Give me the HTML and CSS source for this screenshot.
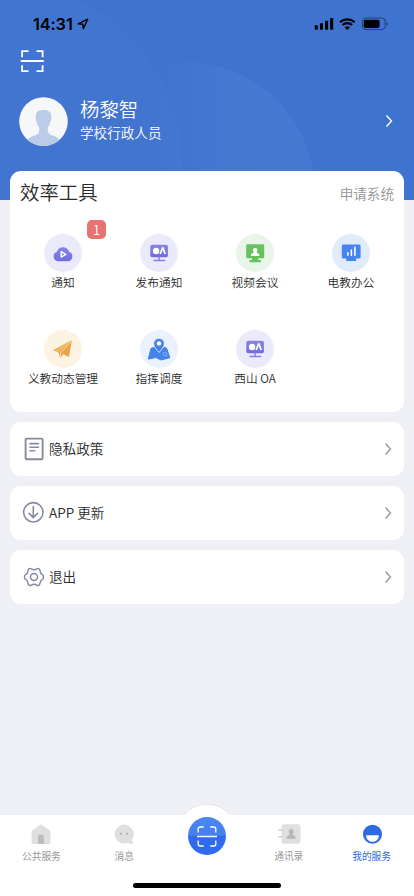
FILE: index.html
```html
<!DOCTYPE html>
<html lang="zh-CN">
<head>
<meta charset="utf-8">
<meta name="viewport" content="width=device-width, initial-scale=1">
<title>我的服务</title>
<link rel="stylesheet" href="styles.css">
</head>
<body>
<svg width="0" height="0" class="defs" aria-hidden="true">
  <defs>
    <linearGradient id="violet" x1="0" y1="0" x2="0" y2="1"><stop offset="0" stop-color="#8984e4"/><stop offset="1" stop-color="#716ce0"/></linearGradient>
    <symbol id="oa" viewBox="0 0 38 38">
      <rect x="10.3" y="10.8" width="17.6" height="12.4" rx="1.8" fill="url(#violet)"/>
      <path d="M19 23v3.4M14 26.6h10.6" stroke="#8580df" stroke-width="1.5" stroke-linecap="round"/>
      <circle cx="16.1" cy="17" r="3.2" fill="#fff"/>
      <path d="M20.2 20l2.2-5.8h.6l2.2 5.8" fill="none" stroke="#fff" stroke-width="1.7"/>
    </symbol>
    <symbol id="chevron" viewBox="0 0 8 14"><path d="M1.5 1.5L6.5 7l-5 5.5" fill="none" stroke="currentColor" stroke-width="1.4"/></symbol>
  </defs>
</svg>
<div class="app">
  <header class="hero">
    <svg class="hero-bg" viewBox="0 0 414 200"><defs><linearGradient id="arc" gradientUnits="userSpaceOnUse" x1="150" x2="230" y1="0" y2="0"><stop offset="0" stop-color="#fff" stop-opacity="0"/><stop offset="1" stop-color="#fff" stop-opacity=".04"/></linearGradient></defs><circle cx="0" cy="165" r="182" fill="#fff" fill-opacity=".02"/><circle cx="185" cy="192" r="130" fill="url(#arc)"/></svg>
    <div class="status">
      <span class="time">14:31</span>
      <svg class="loc" width="12" height="12" viewBox="0 0 12 12"><path d="M1.2 5.9L10.7 1.2 6.3 10.7 5.8 6.2z" fill="none" stroke="#000" stroke-width="1.4" stroke-linejoin="round"/></svg>
      <svg class="signals" width="76" height="14" viewBox="0 0 76 14">
        <rect x=".7" y="8.2" width="3.1" height="4.5" rx=".8"/><rect x="5.9" y="6.2" width="3.1" height="6.5" rx=".8"/><rect x="11" y="3.7" width="3.1" height="9" rx=".8"/><rect x="16.1" y="1.1" width="3.1" height="11.6" rx=".8"/>
        <path d="M26 5.1a11 11 0 0 1 14.6 0M28.5 8a7.2 7.2 0 0 1 9.6 0" fill="none" stroke="#000" stroke-width="2.1"/><path d="M30.6 10.4a4.2 4.2 0 0 1 5.4 0l-2.7 2.7z"/>
        <rect x="48.4" y="1" width="22.8" height="11.6" rx="3.5" fill="none" stroke="#000" stroke-opacity=".45"/><rect x="49.7" y="2.7" width="15.9" height="8.2" rx="1.8"/><path d="M72.5 5v3.8q1.4-.6 1.4-1.9T72.5 5z" fill-opacity=".45"/>
      </svg>
    </div>
    <svg class="scan" width="24" height="24" viewBox="0 0 24 24"><path d="M2.1 7.2V1.2H8.5M16.5 1.2h6.1v6M22.6 15.2v6H16.5M8.5 21.2H2.100v-6M.8 11h23" fill="none" stroke="#fff" stroke-width="1.8"/></svg>
    <div class="profile">
      <svg class="avatar" width="49" height="49" viewBox="0 0 49 49"><defs><clipPath id="face"><circle cx="24.5" cy="24.5" r="24.3"/></clipPath></defs><circle cx="24.5" cy="24.5" r="24.3" fill="#f6f7f9"/><path clip-path="url(#face)" d="M16.8 20q-.8-7 7.700-7t7.700 7q.7 3-.8 4.500-.6 4-2.600 6v4.200q1 3 6 4 6 2 7.200 8V50H7v-3.300q1.200-6 7.200-8 5-1 6-4v-4.200q-2-2-2.600-6-1.500-1.500-.8-4.500z" fill="#bacce8"/></svg>
      <div class="who"><div class="name">杨黎智</div><div class="role">学校行政人员</div></div>
      <svg class="go" width="8" height="14"><use href="#chevron"/></svg>
    </div>
  </header>

  <main>
    <section class="card tools">
      <div class="tools-head"><h2>效率工具</h2><span>申请系统</span></div>
      <div class="grid">
        <div class="tool"><svg class="disc violet" viewBox="0 0 38 38"><path d="M13.8 27.300a4.900 4.900 0 0 1-.8-9.500 6.200 6.200 0 0 1 12 0 4.900 4.900 0 0 1-.8 9.500z" fill="url(#violet)"/><path d="M17.200 17.700v5.400l4.600-2.700z" fill="none" stroke="#fff" stroke-width="1.400" stroke-linejoin="round"/></svg><span>通知</span><b class="badge">1</b></div>
        <div class="tool"><svg class="disc violet" viewBox="0 0 38 38"><use href="#oa"/></svg><span>发布通知</span></div>
        <div class="tool"><svg class="disc green" viewBox="0 0 38 38"><rect x="10.200" y="10.300" width="18" height="14" rx="1.300" fill="#68c05f"/><path d="M16 24h6.300v2h2.500v2.200H13.500V26H16z" fill="#68c05f"/><path d="M19.200 14a2.200 2.200 0 0 1 1.600 3.800v1l2.500 1.300v2h-8.200v-2l2.500-1.300v-1a2.200 2.200 0 0 1 1.600-3.800z" fill="#fff"/></svg><span>视频会议</span></div>
        <div class="tool"><svg class="disc blue" viewBox="0 0 38 38"><rect x="9.800" y="10.500" width="18.800" height="14" rx="1.500" fill="#4684ee"/><path d="M14.200 24h10v3h-10z" fill="#4684ee"/><path d="M15.900 18.800v2.500M19.400 16v5.300M22.900 13.200v8.100" stroke="#fff" stroke-width="1.600" stroke-linecap="round"/></svg><span>电教办公</span></div>
        <div class="tool"><svg class="disc orange" viewBox="0 0 38 38"><path d="M27.800 10L8.800 20.300l5.600 2.200z" fill="#edb65d"/><path d="M27.800 10L14.400 22.500l1.800 5.400 3-3.700 5.800 2.700z" fill="#e6a548"/><path d="M27.300 10.800L16.800 22.900l-.5 4.600" fill="none" stroke="#fdf3e2" stroke-width=".7"/></svg><span>义教动态管理</span></div>
        <div class="tool"><svg class="disc sky" viewBox="0 0 38 38"><path d="M11 18.300l3.500-1 4.400 5.200 5-5.200 2.700.9 3.200 9.500-8.500 2.300-5.500-2.400-7.500 1.500z" fill="#4483e8" stroke="#4483e8" stroke-linejoin="round"/><path d="M19 22.500c-3.200-3.600-5.300-6-5.300-9a5.300 5.300 0 0 1 10.600 0c0 3-2.100 5.400-5.300 9z" fill="#4483e8" stroke="#edf3fd" stroke-width=".8"/><circle cx="19" cy="13.400" r="2.200" fill="#fff"/><circle cx="25" cy="24" r="1.800" fill="none" stroke="#8fb8fa" stroke-width=".8"/><path d="M26.200 25.400l1.200 1.200" stroke="#8fb8fa" stroke-width=".8"/></svg><span>指挥调度</span></div>
        <div class="tool"><svg class="disc violet" viewBox="0 0 38 38"><use href="#oa"/></svg><span class="latin">西山 OA</span></div>
      </div>
    </section>

    <a class="card row"><svg class="ico" width="24" height="24" viewBox="0 0 24 24"><rect x="3.600" y="1.600" width="17" height="20.600" rx="1" stroke-width="1.900"/><path d="M8 6.600h8.500M8 10.200h8.500M8 13.700h4.600" stroke-width="1.600"/></svg><span>隐私政策</span><svg class="go" width="8" height="14"><use href="#chevron"/></svg></a>
    <a class="card row"><svg class="ico" width="24" height="24" viewBox="0 0 24 24"><circle cx="11.300" cy="11.300" r="9.700" stroke-width="1.600"/><path d="M11.300 5.600v11M7 12.300l4.300 4.300 4.300-4.300" stroke-width="1.600"/></svg><span>APP 更新</span><svg class="go" width="8" height="14"><use href="#chevron"/></svg></a>
    <a class="card row"><svg class="ico" width="24" height="24" viewBox="0 0 24 24"><path d="M7.300 3.700q1-.6 2 .1 2.700 1.700 5.400 0 1-.7 2-.1 1.200.7 1.300 2 .1 2.800 2.500 3.900 1 .5 1 2.400t-1 2.400q-2.400 1.100-2.500 3.900-.1 1.300-1.300 2-1 .6-2-.1-2.700-1.700-5.400 0-1 .7-2 .1-1.200-.7-1.300-2-.1-2.800-2.500-3.900-1-.5-1-2.400t1-2.400q2.400-1.100 2.500-3.900.1-1.300 1.300-2z" stroke-width="1.500"/><circle cx="12" cy="12" r="3.500" stroke-width="1.500"/></svg><span>退出</span><svg class="go" width="8" height="14"><use href="#chevron"/></svg></a>
  </main>

  <nav class="tabs">
    <div class="tab"><svg width="24" height="24" viewBox="0 0 24 24"><path d="M12 2.600q.8 0 1.500.6l6.800 4.700q1.200.8 1.200 2.200v9.900q0 2-2 2h-15q-2 0-2-2v-9.900q0-1.400 1.200-2.200l6.800-4.700q.7-.6 1.500-.6z" fill="#dfdfdf"/><path d="M9 22v-6.500a3 3 0 0 1 6 0V22z" fill="#bdbdbd"/></svg><span>公共服务</span></div>
    <div class="tab"><svg width="24" height="24" viewBox="0 0 24 24"><circle cx="12.200" cy="12.100" r="9.500" fill="#dfdfdf"/><path d="M13 21.500l6.500-4.500q0 2.300 1.500 3.700.2 1-.8 1.200-3 .2-4.200-1.300z" fill="#dfdfdf"/><circle cx="9" cy="11.700" r="1" fill="#aaa"/><circle cx="15.200" cy="11.700" r="1" fill="#aaa"/></svg><span>消息</span></div>
    <div class="tab center">
      <svg class="bump" width="62" height="62" viewBox="0 0 62 62"><path d="M5.500 14.500A30 30 0 0 1 56.500 14.500V50h-51z" fill="#fff"/><path d="M8 11.700A30 30 0 0 1 54 11.700" fill="none" stroke="#dcdde1" stroke-width=".9"/><defs><linearGradient id="btn" x1="0" y1="0" x2="0" y2="1"><stop offset="0" stop-color="#4a88f1"/><stop offset=".5" stop-color="#447fee"/><stop offset=".5" stop-color="#306af0"/><stop offset="1" stop-color="#2f6cec"/></linearGradient></defs><circle cx="31" cy="33" r="19" fill="url(#btn)"/><path d="M22.200 29.500V26q0-2 2-2h3.500M34.300 24h3.500q2 0 2 2v3.500M39.800 37.500V41q0 2-2 2h-3.500M27.700 43h-3.500q-2 0-2-2v-3.500M21 33.500h20" fill="none" stroke="#fff" stroke-width="1.300"/></svg>
    </div>
    <div class="tab"><svg width="24" height="24" viewBox="0 0 24 24"><rect x="3.500" y="2.300" width="19" height="19.400" rx="3" fill="#dfdfdf"/><path d="M1 8.300h3M1 14.700h3" stroke="#d0d0d0" stroke-width="1.400" stroke-linecap="round"/><path d="M13.200 7a2.600 2.600 0 0 1 1.600 4.600v1.200l2.700 1.700v2.200H8.900v-2.200l2.700-1.700v-1.200A2.600 2.600 0 0 1 13.200 7z" fill="#b7b7b7"/></svg><span>通讯录</span></div>
    <div class="tab active"><svg width="24" height="24" viewBox="0 0 24 24"><circle cx="11.500" cy="12.200" r="9.500" fill="#2f69e6"/><path d="M5 13.300h13a6.500 6.500 0 0 1-13 0z" fill="#fff"/></svg><span>我的服务</span></div>
    <i class="home"></i>
  </nav>
</div>
</body>
</html>
```
FILE: styles.css
```css
* { box-sizing: border-box; }
body { margin: 0; background: #eff0f5; font-family: "Liberation Sans", "Noto Sans CJK SC", sans-serif; font-weight: 350; color: #2b2b2b; }
.defs { position: absolute; }
.app { width: 414px; height: 896px; display: flex; flex-direction: column; overflow: hidden; }

.hero { position: relative; height: 200px; flex: none; background: #3e73d0; color: #fff; }
.hero-bg { position: absolute; inset: 0; width: 414px; height: 200px; }
.hero > :not(.hero-bg) { position: relative; }
.status { height: 50px; display: flex; align-items: flex-start; padding: 14px 24px 0 33px; color: #000; }
.time { font: 600 16.3px/20px Inter, sans-serif; width: 42px; letter-spacing: -.1px; white-space: nowrap; }
.loc { margin: 4px 0 0 2px; }
.signals { margin: 3px 0 0 auto; }
.scan { display: block; margin-left: 20px; }
.profile { display: flex; align-items: center; margin-top: 22px; padding: 0 21px 0 19px; height: 50px; }
.who { flex: 1; margin-left: 12px; }
.name { font-size: 19.4px; line-height: 26px; }
.role { font-size: 13.6px; line-height: 22px; }
.go { flex: none; }

main { flex: 1; display: flex; flex-direction: column; gap: 10px; margin-top: -29px; padding: 0 10px; position: relative; }
.card { background: #fff; border-radius: 11px; flex: none; }
.tools { height: 241px; }
.tools-head { display: flex; align-items: center; justify-content: space-between; height: 44px; padding: 0 10px; }
h2 { margin: 0; font-size: 19.4px; font-weight: 350; line-height: 28px; }
.tools-head span { font-size: 13.6px; color: #949494; }
.grid { display: grid; grid-template-columns: repeat(4, 96px); grid-auto-rows: 96px; padding: 19px 5px 0; }
.tool { position: relative; display: flex; flex-direction: column; align-items: center; font-size: 11.7px; line-height: 20px; white-space: nowrap; }
.latin { font-family: "Noto Sans CJK SC", sans-serif; margin-top: -1px; }
.disc { width: 38px; height: 38px; border-radius: 50%; margin-bottom: 1px; }
.violet { background: #ebeafa; }
.green { background: #e8f5e8; }
.blue { background: #e1ecfb; }
.orange { background: #fdf3e2; }
.sky { background: #ebf2fd; }
.badge { position: absolute; left: 72px; top: -14px; width: 19px; height: 19px; border-radius: 5px; background: #e5736f; color: #fff; font: 350 13px/19px "Noto Sans CJK SC", sans-serif; text-align: center; }
.row { height: 54px; display: flex; align-items: center; padding: 0 12px; font-size: 13.6px; }
.row span { flex: 1; margin-left: 3px; margin-top: -2px; font-family: "Noto Sans CJK SC", sans-serif; }
.row .go { color: #999; }
.ico { fill: none; stroke: #868a9f; stroke-linecap: round; stroke-linejoin: round; }

.tabs { position: relative; flex: none; height: 81px; background: #fff; display: grid; grid-template-columns: repeat(5, 1fr); }
.tab { display: flex; flex-direction: column; align-items: center; padding-top: 7px; font-size: 9.7px; font-weight: 400; line-height: 16px; color: #999; }
.tab span { margin-top: 3px; }
.tab:nth-child(n+4) span { margin-left: -2px; }
.center { padding: 0; }
.bump { margin-top: -12px; flex: none; }
.active { color: #2f69e6; }
.home { position: absolute; left: 133px; bottom: 8px; width: 148px; height: 5px; border-radius: 3px; background: #000; }
```
